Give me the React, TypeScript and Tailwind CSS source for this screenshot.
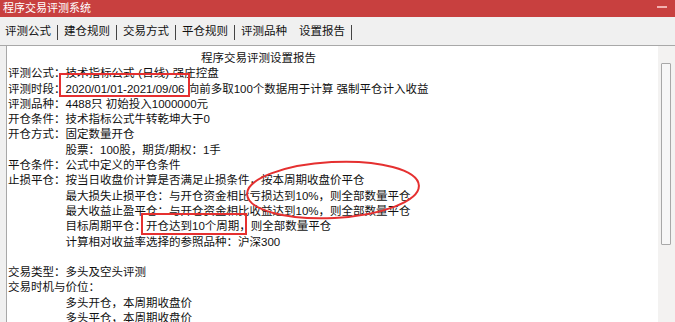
import React from "react";

const lines: { text: string; indent?: boolean; blank?: boolean }[] = [
  { text: "评测公式：技术指标公式-(日线)-强庄控盘" },
  { text: "评测时段：2020/01/01-2021/09/06 向前多取100个数据用于计算 强制平仓计入收益" },
  { text: "评测品种：4488只 初始投入1000000元" },
  { text: "开仓条件：技术指标公式牛转乾坤大于0" },
  { text: "开仓方式：固定数量开仓" },
  { text: "股票：100股，期货/期权：1手", indent: true },
  { text: "平仓条件：公式中定义的平仓条件" },
  { text: "止损平仓：按当日收盘价计算是否满足止损条件，按本周期收盘价平仓" },
  { text: "最大损失止损平仓：与开仓资金相比亏损达到10%，则全部数量平仓", indent: true },
  { text: "最大收益止盈平仓：与开仓资金相比收益达到10%，则全部数量平仓", indent: true },
  { text: "目标周期平仓：开仓达到10个周期，则全部数量平仓", indent: true },
  { text: "计算相对收益率选择的参照品种：沪深300", indent: true },
  { text: "", blank: true },
  { text: "交易类型：多头及空头评测" },
  { text: "交易时机与价位：" },
  { text: "多头开仓，本周期收盘价", indent: true },
  { text: "多头平仓，本周期收盘价", indent: true },
];

const tabs = ["评测公式", "建仓规则", "交易方式", "平仓规则", "评测品种"];

export default function App() {
  return (
    <div
      className="relative w-[675px] h-[322px] overflow-hidden flex flex-col bg-[#f0f0f0] text-[#111]"
      style={{ fontFamily: '"Liberation Sans", "Noto Sans CJK SC", sans-serif' }}
    >
      {/* title bar */}
      <div className="h-[17px] shrink-0 bg-[#c8403f] flex items-center justify-between pl-[3px] pr-[8px]">
        <span className="text-white text-[11px] leading-none">程序交易评测系统</span>
        <span className="w-[10px] h-[2px] bg-[#f2b0b0] mb-[4px]" />
      </div>
      {/* tab bar */}
      <div className="h-[29px] shrink-0 flex items-center border-b border-[#a8a8a8] pl-[5px] pt-[2px] text-[11.5px] leading-none">
        {tabs.map((t) => (
          <React.Fragment key={t}>
            <span>{t}</span>
            {t !== "评测品种" && <span className="w-px h-[15px] bg-[#444] mx-[6px]" />}
          </React.Fragment>
        ))}
        <span className="ml-[12px]">设置报告</span>
        <span className="w-px h-[15px] bg-[#444] ml-[6px]" />
      </div>
      {/* body */}
      <div className="flex-1 flex pl-[6px] min-h-0">
        <div className="flex-1 bg-white border-l border-[#a8a8a8] pl-[1px] pt-[5px] text-[11.5px] leading-[15.3px] whitespace-nowrap overflow-hidden">
          <div className="pl-[193px]">程序交易评测设置报告</div>
          {lines.map((l, i) =>
            l.blank ? (
              <div key={i} className="h-[15.3px]" />
            ) : (
              <div key={i} className={l.indent ? "pl-[57.5px]" : ""}>
                {l.text}
              </div>
            )
          )}
        </div>
        {/* scrollbar */}
        <div className="w-[17px] shrink-0 bg-[#f3f2f1] pt-[17px] pl-[3px]">
          <div className="w-[10px] h-[182px] bg-[#f7f7f7] border border-[#a8a8a8] rounded-[1px]" />
        </div>
      </div>
      {/* red annotations overlay */}
      <svg className="absolute inset-0 pointer-events-none" width="675" height="322">
        <rect x="60" y="74" width="129" height="22" fill="none" stroke="#e53030" strokeWidth="2" />
        <rect x="142" y="214" width="104" height="20" fill="none" stroke="#e53030" strokeWidth="2" />
        <ellipse
          cx="333"
          cy="190"
          rx="86"
          ry="28"
          fill="none"
          stroke="#e53030"
          strokeWidth="2"
          transform="rotate(-3 333 190)"
        />
      </svg>
    </div>
  );
}
